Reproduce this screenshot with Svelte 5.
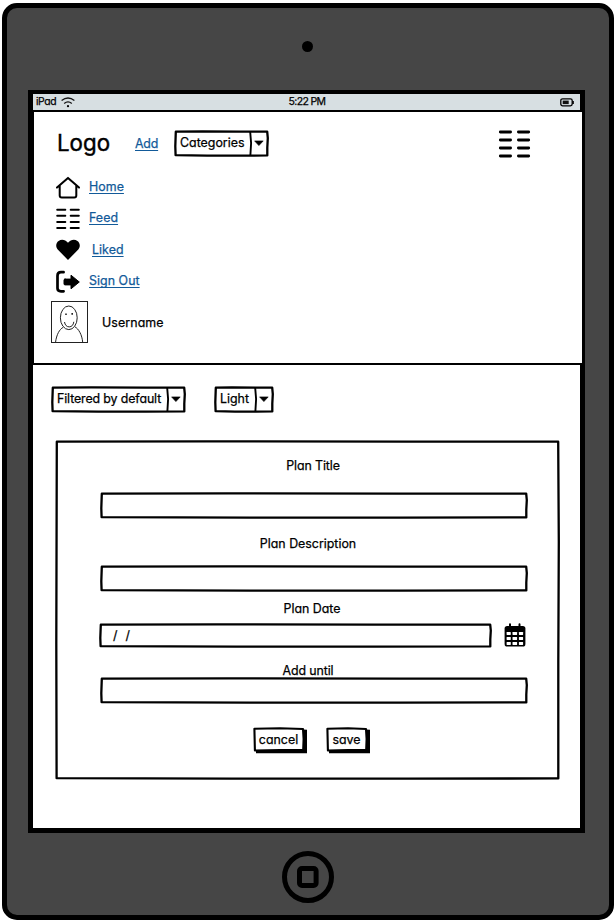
<script>
  const links = [
    { icon: 'home', text: 'Home', gap: 9 },
    { icon: 'list', text: 'Feed', gap: 9 },
    { icon: 'heart', text: 'Liked', gap: 12 },
    { icon: 'exit', text: 'Sign Out', gap: 9 }
  ];
  const rows = [0, 1, 2, 3];

  // slightly uneven outline, as if drawn by hand
  const outline = (w, h) =>
    `M1.8 1.7 L${w * 0.3} 1.3 L${w * 0.7} 1.6 L${w - 1.8} 1.7 L${w - 1.2} ${h * 0.3} L${w - 1.7} ${h * 0.65} L${w - 1.7} ${h - 1.6} L${w * 0.7} ${h - 1.3} L${w * 0.35} ${h - 1.4} L1.6 ${h - 1.8} L1.3 ${h * 0.6} Z`;
</script>

{#snippet frame(w, h, sw = 2.3)}
  <svg class="frame" width={w} height={h} viewBox="0 0 {w} {h}">
    <path d={outline(w, h)} fill="none" stroke="#000" stroke-width={sw} stroke-linejoin="round" />
  </svg>
{/snippet}

{#snippet combo(text, w, tone)}
  <div class="combo {tone}" style="width:{w}px">
    {@render frame(w, 27)}
    <span class="combo-text">{text}</span>
    <svg class="arrow" width="20" height="27" viewBox="0 0 20 27">
      <path d="M1.2 2 L2.1 13 L1.4 25" fill="none" stroke="#000" stroke-width="1.9" />
      <path d="M5.6 10.9 H14.2 L9.9 15.6 Z" stroke="#000" stroke-width=".6" stroke-linejoin="round" />
    </svg>
  </div>
{/snippet}

{#snippet icon(name)}
  <svg class="icon" width="24" height="24" viewBox="0 0 24 24" fill="none" stroke="#000" stroke-width="2" stroke-linecap="round" stroke-linejoin="round">
    {#if name === 'home'}
      <path d="M1 11.6 L12 1.9 L23 11.6 M3.7 9.6 V19.6 Q3.7 21.6 5.7 21.6 H18.3 Q20.3 21.6 20.3 19.6 V9.6" />
    {:else if name === 'list'}
      {#each rows as r}
        <path d="M1.2 {2.7 + r * 6.1} H9.3 M14.7 {2.7 + r * 6.1} H22.8" />
      {/each}
    {:else if name === 'heart'}
      <path d="M12 22 L1.7 11.5 C-.8 8.6 .1 4.5 2.6 2.9 C5.7 .9 9.4 1.7 12 4.8 C14.6 1.7 18.3 .9 21.4 2.9 C23.9 4.5 24.8 8.6 22.3 11.5 Z" fill="#000" stroke="none" />
    {:else}
      <path d="M7.6 2.2 H5 Q1.5 2.2 1.5 5.7 V18.3 Q1.5 21.3 5 21.3 H7.6" stroke-width="2.7" />
      <path d="M9 9.1 H15 V5.2 L23.3 12 L15 18.8 V14.9 H9 Q8 14.9 8 13.9 V10.1 Q8 9.1 9 9.1 Z" fill="#000" stroke-width="1" />
    {/if}
  </svg>
{/snippet}

<div class="page">
  <div class="device">
    <div class="camera"></div>
    <div class="screen">
      <div class="status">
        <span class="carrier"><span>iPad</span>
          <svg width="14" height="11" viewBox="0 0 14 11" fill="none" stroke="#111" stroke-width="1.3">
            <path d="M.6 3.6 Q7 -1.6 13.4 3.6 M3.2 6.4 Q7 3.2 10.8 6.4" />
            <circle cx="7" cy="9.2" r="1.1" fill="#000" stroke="none" />
          </svg>
        </span>
        <span class="time">5:22 PM</span>
        <svg class="battery" width="14" height="9" viewBox="0 0 14 9">
          <rect x=".8" y=".8" width="11.4" height="7" rx="1.8" fill="none" stroke="#000" stroke-width="1.3" />
          <path d="M13.1 3 V6" stroke="#000" stroke-width="1.5" />
          <rect x="2.7" y="2.6" width="6" height="3.5" fill="#111" />
        </svg>
      </div>

      <header>
        <nav>
          <span class="logo">Logo</span>
          <a class="link add" href="#add">Add</a>
          {@render combo('Categories', 95, 'cat')}
          <svg class="menu" width="34" height="30" viewBox="0 0 34 30" stroke="#000" stroke-width="2.8" stroke-linecap="round">
            {#each rows as r}
              <path d="M2.3 {3 + r * 8} H12.6 M20.4 {3 + r * 8} H30.7" />
            {/each}
          </svg>
        </nav>
        <ul>
          {#each links as l}
            <li style="gap:{l.gap}px">{@render icon(l.icon)}<a class="link" href="#{l.icon}">{l.text}</a></li>
          {/each}
        </ul>
        <div class="user">
          <svg width="37" height="42" viewBox="0 0 37 42" fill="none" stroke="#222" stroke-width="1">
            <rect x=".5" y=".5" width="36" height="41" />
            <ellipse cx="17.8" cy="16.8" rx="8.4" ry="11.8" />
            <path d="M4.5 41.5 C5.5 33.5 8.5 28.3 12.2 26.3 M23.8 25.8 C27.5 27.5 31.2 34 31.7 41.5 M13.5 21 Q14.3 25.7 18.2 25.9 Q22.2 25.6 22.8 20.8" />
            <path d="M14.2 13.2 H15.8 M20.4 12.9 H22" stroke-width="1.6" />
          </svg>
          <span>Username</span>
        </div>
      </header>

      <main>
        <div class="filters">
          {@render combo('Filtered by default', 135, 'filter')}
          {@render combo('Light', 60, 'light')}
        </div>

        <form>
          {@render frame(505, 340, 2.3)}
          <label class="title" for="t">Plan Title</label>
          <div class="field" id="t">{@render frame(428, 27)}</div>
          <label class="desc" for="d">Plan Description</label>
          <div class="field" id="d">{@render frame(428, 27)}</div>
          <label class="date" for="e">Plan Date</label>
          <div class="date-row">
            <div class="field short" id="e">
              {@render frame(393, 25)}
              <span>/</span><span>/</span>
            </div>
            <svg width="22" height="24" viewBox="0 0 22 24">
              <path d="M6 1.2 V5 M15.5 1.2 V5" stroke="#000" stroke-width="2" stroke-linecap="round" />
              <rect x=".6" y="3" width="20.8" height="20.6" rx="2.6" />
              {#each [2.6, 8.5, 14.9] as x}
                {#each [9, 13.9, 18.9] as y}
                  <rect {x} {y} width={x === 8.5 ? 4.6 : 4.2} height="3" rx=".4" fill="#fff" />
                {/each}
              {/each}
            </svg>
          </div>
          <label class="until" for="u">Add until</label>
          <div class="field last" id="u">{@render frame(428, 27)}</div>
          <div class="actions">
            {#each [{ t: 'cancel', w: 54 }, { t: 'save', w: 44 }] as b}
              <div class="button" style="width:{b.w}px">
                <svg class="frame" width={b.w} height="27" viewBox="0 0 {b.w} 27">
                  <path d="M3 26.3 V22 L{b.w - 4} 22 V2.5 L{b.w} 2.8 V26.3 Z" />
                  <path d="M1.4 1.8 L{b.w * 0.5} 1.3 L{b.w - 4} 2 L{b.w - 3.4} 12 L{b.w - 3.8} 22.7 L{b.w * 0.5} 23 L1.9 23.5 Z" fill="#fff" stroke="#000" stroke-width="2.1" stroke-linejoin="round" />
                </svg>
                <span>{b.t}</span>
              </div>
            {/each}
          </div>
        </form>
      </main>
    </div>
    <svg class="home" width="52" height="52" viewBox="0 0 52 52" fill="none" stroke="#000" stroke-width="5">
      <circle cx="26" cy="26" r="23.5" />
      <rect x="17.5" y="17.5" width="16.6" height="17" rx="2.5" />
    </svg>
  </div>
</div>

<style>
  :global(body) { margin: 0; background: #fff; }
  .page {
    box-sizing: border-box; width: 616px; height: 922px; padding: 3px 2px 2px;
    font-family: Inter, 'Liberation Sans', sans-serif; font-feature-settings: 'cv11' 1;
    font-size: 12.4px; line-height: 16px; color: #000; -webkit-text-stroke: .25px currentColor;
  }
  .device {
    box-sizing: border-box; width: 612px; height: 917px; border: 5px solid #000; border-radius: 15px;
    background: #464646; display: flex; flex-direction: column; align-items: center;
  }
  .camera { width: 11px; height: 11px; margin: 32.5px 1px 0 0; border-radius: 50%; background: #000; flex: none; }
  .screen {
    box-sizing: border-box; width: 557px; height: 743px; margin: 38.5px 3px 0 0; border: 5px solid #000; border-top-width: 4px;
    background: #fff; flex: none; display: flex; flex-direction: column;
  }
  .home { margin-top: 18px; flex: none; }
  .status { height: 16px; flex: none; background: #d7dfe2; display: grid; grid-template-columns: 1fr auto 1fr; align-items: center; font-size: 10.4px; line-height: 14px; padding: 0 6px 0 3px; }
  .carrier { display: flex; gap: 5px; align-items: center; letter-spacing: -.4px; }
  .time { font-size: 10.5px; letter-spacing: -.65px; position: relative; left: 2px; }
  .battery { justify-self: end; }
  header {
    box-sizing: border-box; height: 255px; flex: none; margin: 0 -4px 0 -1px; padding: 18px 0 0 17px;
    border: 2px solid #000; border-bottom-width: 2.5px; background: #fff; position: relative;
  }
  nav { display: flex; height: 27px; align-items: center; padding-left: 6px; }
  .logo { font-size: 22.3px; line-height: 27px; width: 78px; margin-top: -3px; -webkit-text-stroke-width: .4px; }
  .link { color: #125a99; text-decoration: underline; text-underline-offset: 2px; text-decoration-skip-ink: none; text-decoration-thickness: 1px; }
  .add { width: 39px; letter-spacing: -.2px; }
  .menu { margin-left: 229px; }
  ul { list-style: none; margin: 15px 0 0; padding: 0 0 0 5px; }
  li { height: 31.3px; display: flex; align-items: center; letter-spacing: .05px; }
  li .link { margin-top: -1px; }
  .icon { flex: none; }
  .user { display: flex; align-items: center; gap: 14px; margin-top: 4px; }
  .user span { margin-top: 2px; letter-spacing: .1px; }
  .frame { position: absolute; left: 0; top: 0; pointer-events: none; }
  .combo { position: relative; height: 27px; display: flex; justify-content: space-between; flex: none; }
  .combo-text { padding: 5px 0 0 6px; white-space: nowrap; }
  .filter .combo-text { letter-spacing: -.12px; }
  .arrow { flex: none; }
  main { padding: 21px 0 0 18px; }
  .filters { display: flex; gap: 28px; }
  form { position: relative; width: 505px; height: 340px; margin: 27px 0 0 4px; display: flex; flex-direction: column; box-sizing: border-box; padding: 18px 0 0 45px; }
  label { width: 428px; text-align: center; height: 16px; position: relative; flex: none; }
  .title { margin-left: -1px; letter-spacing: -.1px; }
  .desc { margin: 17px 0 0 -6px; }
  .date { margin: 9px 0 0 -2px; }
  .until { margin: 15px 0 0 -6px; letter-spacing: -.1px; }
  .field { position: relative; width: 428px; height: 27px; margin-top: 18px; flex: none; }
  .desc + .field { margin-top: 13px; }
  .date-row { display: flex; gap: 12px; margin: 6px 0 0 -1px; }
  .short { width: 393px; height: 25px; margin: 0; display: flex; align-items: center; padding-left: 14px; gap: 8px; box-sizing: border-box; }
  .last { margin-top: -2px; }
  .actions { display: flex; gap: 19px; margin: 23px 0 0 153px; }
  .button { position: relative; height: 27px; }
  .button span { position: relative; display: block; padding: 5px 3px 0 0; text-align: center; }
</style>
